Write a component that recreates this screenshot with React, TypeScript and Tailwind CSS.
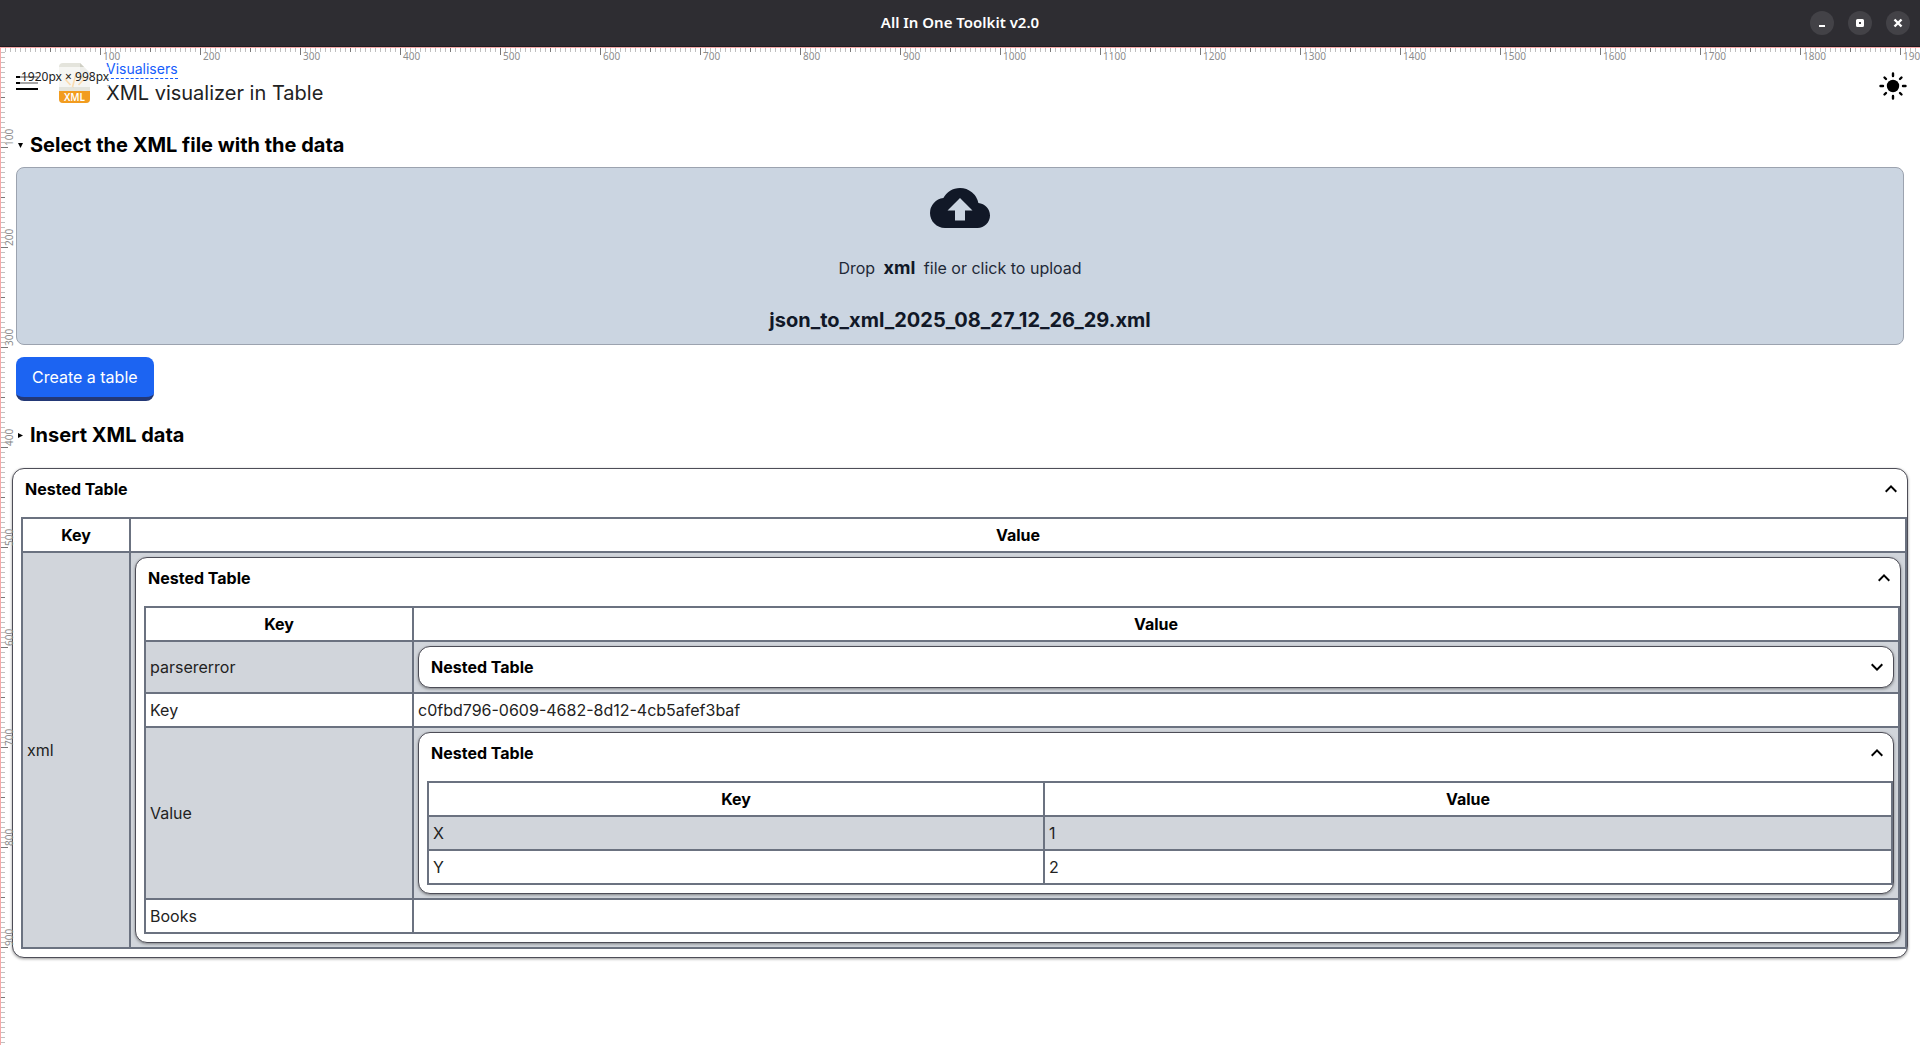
import type { ReactNode } from "react";
import { MdCloudUpload, MdExpandLess, MdExpandMore } from "react-icons/md";

function TitleBar() {
  const button = "flex size-6 items-center justify-center rounded-full bg-[#434247]";
  return (
    <header className="grid h-[47px] grid-cols-[1fr_auto_1fr] items-center border-b border-[#1c1b1f] bg-[#2e2d32] px-[10px] text-white">
      <span />
      <h1 className="pb-0.5 font-['Noto_Sans',sans-serif] text-[15px] font-semibold">All In One Toolkit v2.0</h1>
      <div className="flex justify-end gap-[14px]">
        <button type="button" aria-label="Minimize" className={button}>
          <svg viewBox="0 0 24 24" className="size-6"><path d="M9 14h6v2H9z" fill="#fff" /></svg>
        </button>
        <button type="button" aria-label="Maximize" className={button}>
          <svg viewBox="0 0 24 24" className="size-6"><path d="M9.5 9.5h5v5h-5z" fill="none" stroke="#fff" strokeWidth="3" strokeLinejoin="round" /></svg>
        </button>
        <button type="button" aria-label="Close" className={button}>
          <svg viewBox="0 0 24 24" className="size-6"><path d="M8.5 8.500l7 7m0-7l-7 7" fill="none" stroke="#fff" strokeWidth="2.400" /></svg>
        </button>
      </div>
    </header>
  );
}

function hundreds(limit: number) {
  return Array.from({ length: Math.floor(limit / 100) }, (_, i) => (i + 1) * 100);
}

function Ruler({ width, height }: { width: number; height: number }) {
  return (
    <div className="pointer-events-none absolute inset-0 overflow-hidden font-['Noto_Sans',sans-serif]">
      <svg className="absolute inset-0 h-full w-full" aria-hidden="true">
        <defs>
          <pattern id="ruler-x" width="100" height="8" patternUnits="userSpaceOnUse">
            {Array.from({ length: 20 }, (_, i) => (
              <rect key={i} x={i * 5} y="0" width="1" height={i === 0 ? 8 : 5} fill={i % 10 === 0 ? "#777" : "#c0c0c0"} />
            ))}
          </pattern>
          <pattern id="ruler-y" width="8" height="100" patternUnits="userSpaceOnUse">
            {Array.from({ length: 20 }, (_, i) => (
              <rect key={i} x="0" y={i * 5} width={i === 0 ? 8 : 5} height="1" fill={i % 10 === 0 ? "#777" : "#c0c0c0"} />
            ))}
          </pattern>
        </defs>
        <rect width="100%" height="8" fill="url(#ruler-x)" />
        <rect width="8" height="100%" fill="url(#ruler-y)" />
        <rect width="100%" height="1" fill="#f7a8a8" />
        <rect width="1" height="100%" fill="#f7a8a8" />
        <g fill="#8c8c8c" fontSize="10">
          {hundreds(width).map((n) => (
            <text key={n} x={n + 3} y="13">{n}</text>
          ))}
          {hundreds(height).map((n) => (
            <text key={n} transform={`translate(13 ${n - 1}) rotate(-90)`}>{n}</text>
          ))}
        </g>
      </svg>
      <span className="absolute top-5 left-5 bg-white/65 pl-px text-[12px] leading-5 text-[#222]">
        {width}px × {height}px
      </span>
    </div>
  );
}

function XmlIcon() {
  return (
    <svg viewBox="0 0 31 40" className="h-10 w-[31px]" aria-hidden="true">
      <path d="M4 0h17l10 10v26a4 4 0 0 1-4 4H4a4 4 0 0 1-4-4V4a4 4 0 0 1 4-4z" fill="#e4e4dc" />
      <path d="M21 0l10 10H24a3 3 0 0 1-3-3z" fill="#cfcfc4" />
      <path d="M11.500 11l-5 5.500 5 5.500m8-11l5 5.500-5 5.500M17.500 9l-4 15" fill="none" stroke="#f29c1f" strokeWidth="1.600" />
      <path d="M0 28h31v8a4 4 0 0 1-4 4H4a4 4 0 0 1-4-4z" fill="#f29c1f" />
      <text x="15.500" y="37.500" textAnchor="middle" fontFamily="Noto Sans, sans-serif" fontWeight="600" fontSize="10" fill="#fff">XML</text>
    </svg>
  );
}

function SunIcon() {
  return (
    <svg viewBox="0 0 28 28" className="size-7" aria-hidden="true">
      <circle cx="14" cy="14" r="6.200" />
      <path d="M14 1.500v2.500M14 24v2.500M1.500 14h2.500M24 14h2.500M5.500 5.500l1.500 1.500M21 21l1.500 1.500M22.500 5.500l-1.500 1.500M7 21l-1.500 1.500" stroke="#000" strokeWidth="2.400" strokeLinecap="round" />
    </svg>
  );
}

function PageHeader() {
  return (
    <div className="flex items-center px-4 pt-3">
      <button type="button" aria-label="Open menu" className="flex flex-col gap-1">
        <span className="h-0.5 w-[22px] bg-black" />
        <span className="h-0.5 w-[22px] bg-black" />
        <span className="h-0.5 w-[22px] bg-black" />
      </button>
      <div className="ml-[21px]"><XmlIcon /></div>
      <div className="ml-4 flex flex-1 flex-col items-start">
        <a href="#visualisers" className="border-b border-dashed border-blue-600 text-[14px] leading-[19px] text-blue-600">Visualisers</a>
        <h2 className="text-[20px] leading-7">XML visualizer in Table</h2>
      </div>
      <button type="button" aria-label="Toggle theme" className="-mr-[3px] mt-1.5"><SunIcon /></button>
    </div>
  );
}

function Section({ title, open, children }: { title: string; open?: boolean; children?: ReactNode }) {
  return (
    <details open={open} className="group/section">
      <summary className="flex cursor-pointer list-none items-center gap-[7px] text-[20px] leading-7 font-bold text-black">
        <svg viewBox="0 0 6 6" className="ml-0.5 size-[5px] group-open/section:rotate-90" aria-hidden="true"><path d="M0 0l6 3-6 3z" /></svg>
        {title}
      </summary>
      {children}
    </details>
  );
}

function Nested({ open, children }: { open?: boolean; children?: ReactNode }) {
  return (
    <details open={open} className="rounded-xl border border-[#4d4d57] bg-white shadow-[0_1px_3px_rgba(0,0,0,0.4)]">
      <summary className="flex cursor-pointer list-none items-center justify-between py-2 pr-1 pl-3 font-bold text-black">
        Nested Table
        {open ? <MdExpandLess className="size-6" /> : <MdExpandMore className="size-6" />}
      </summary>
      {children && <div className="py-2 pl-2">{children}</div>}
    </details>
  );
}

function DataTable({ keyColumn, rows }: { keyColumn: string; rows: [string, ReactNode][] }) {
  return (
    <table className="w-full table-fixed border-collapse border-2 border-[#6b7280]">
      <colgroup>
        <col className={keyColumn} />
        <col />
      </colgroup>
      <thead className="font-bold text-black">
        <tr className="h-[34px]">
          <th scope="col" className="border-2 border-[#6b7280] p-1">Key</th>
          <th scope="col" className="border-2 border-[#6b7280] p-1">Value</th>
        </tr>
      </thead>
      <tbody>
        {rows.map(([key, value]) => (
          <tr key={key} className="h-[34px] odd:bg-[#d1d5db] even:bg-white">
            <td className="border-2 border-[#6b7280] p-1">{key}</td>
            <td className="border-2 border-[#6b7280] p-1">{value}</td>
          </tr>
        ))}
      </tbody>
    </table>
  );
}

export default function App() {
  return (
    <div className="flex min-h-screen flex-col bg-white">
      <TitleBar />
      <main className="relative flex-1 font-['Inter',sans-serif] text-[16px] leading-6 font-normal text-[#222]">
        <PageHeader />
        <div className="px-4 pt-6">
          <Section title="Select the XML file with the data" open>
            <label className="mt-2 flex cursor-pointer flex-col items-center rounded-lg border border-[#9ca3af] bg-[#cbd5e1] pt-[10px] pb-[10px] text-[#1f2937]">
              <MdCloudUpload className="size-[60px] text-[#111827]" />
              <span className="mt-[18px]">
                Drop <b className="mx-1 text-[18px] font-bold text-[#111827]">xml</b> file or click to upload
              </span>
              <span className="mt-[26px] text-[20px] leading-7 font-bold text-[#111827]">json_to_xml_2025_08_27_12_26_29.xml</span>
              <input type="file" accept=".xml" className="sr-only" />
            </label>
            <button type="button" className="mt-3 rounded-lg border-b-4 border-[#233876] bg-[#1c64f2] px-4 py-2 font-normal text-white">
              Create a table
            </button>
          </Section>
          <div className="mt-5">
            <Section title="Insert XML data" />
          </div>
        </div>
        <div className="px-3 pt-[19px]">
          <Nested open>
            <DataTable
              keyColumn="w-[108px]"
              rows={[
                [
                  "xml",
                  <Nested open>
                    <DataTable
                      keyColumn="w-[268px]"
                      rows={[
                        ["parsererror", <Nested />],
                        ["Key", "c0fbd796-0609-4682-8d12-4cb5afef3baf"],
                        [
                          "Value",
                          <Nested open>
                            <DataTable keyColumn="w-[616px]" rows={[["X", "1"], ["Y", "2"]]} />
                          </Nested>,
                        ],
                        ["Books", ""],
                      ]}
                    />
                  </Nested>,
                ],
              ]}
            />
          </Nested>
        </div>
        <Ruler width={1920} height={998} />
      </main>
    </div>
  );
}
